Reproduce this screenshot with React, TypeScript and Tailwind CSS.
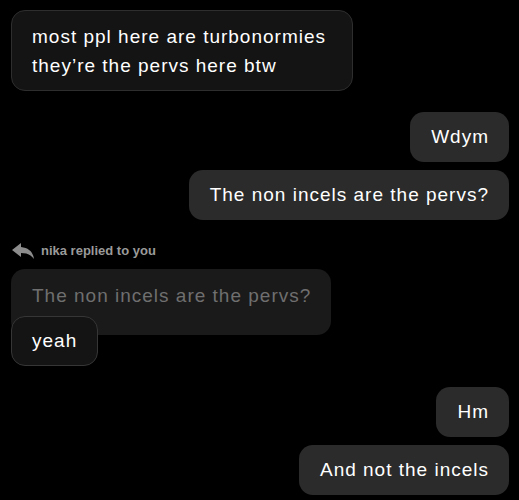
export default function App() {
  return (
    <main
      className="min-h-screen w-full bg-black pl-[11px] pr-[10px] pt-[10px] text-[19px] tracking-[1px] text-white"
      style={{ fontFamily: "'Liberation Sans', Arial, sans-serif" }}
    >
      <div className="flex flex-col">
        <div className="flex h-[81px] flex-col justify-center self-start rounded-[14px] border border-[#2e2e2e] bg-[#141414] pl-[20px] pr-[26px] leading-[29px]">
          <p>most ppl here are turbonormies</p>
          <p>they’re the pervs here btw</p>
        </div>

        <div className="mt-[21px] flex h-[50px] items-center self-end rounded-[14px] bg-[#2b2b2b] pl-[21px] pr-[20px]">
          Wdym
        </div>
        <div className="mt-[8px] flex h-[50px] items-center self-end rounded-[14px] bg-[#2b2b2b] pl-[21px] pr-[20px]">
          The non incels are the pervs?
        </div>

        <div className="mt-[23px] flex h-[16px] items-center gap-[7px] pl-[1px]">
          <svg width="22" height="16" viewBox="0 0 22 16" className="text-[#8c8c8c]">
            <path
              d="M9 0 L0 7 L9 14 L9 10 C14 10 18 11 22 16 C21 9 17 5 9 4 Z"
              fill="currentColor"
            />
          </svg>
          <span className="text-[13px] font-bold leading-[16px] tracking-normal text-[#9a9a9a]">
            nika replied to you
          </span>
        </div>

        <div className="mt-[10px] flex flex-col items-start">
          <div className="flex h-[66px] items-start rounded-[14px] bg-[#1a1a1a] pl-[21px] pr-[20px] pt-[13px] leading-[28px] text-[#6f6f6f]">
            The non incels are the pervs?
          </div>
          <div className="relative z-10 -mt-[19px] flex h-[50px] items-center rounded-[14px] border border-[#363636] bg-[#141414] px-[20px]">
            yeah
          </div>
        </div>

        <div className="mt-[21px] flex h-[50px] items-center self-end rounded-[14px] bg-[#2b2b2b] pl-[21px] pr-[20px]">
          Hm
        </div>
        <div className="mt-[8px] flex h-[50px] items-center self-end rounded-[14px] bg-[#2b2b2b] pl-[21px] pr-[20px]">
          And not the incels
        </div>
      </div>
    </main>
  );
}
